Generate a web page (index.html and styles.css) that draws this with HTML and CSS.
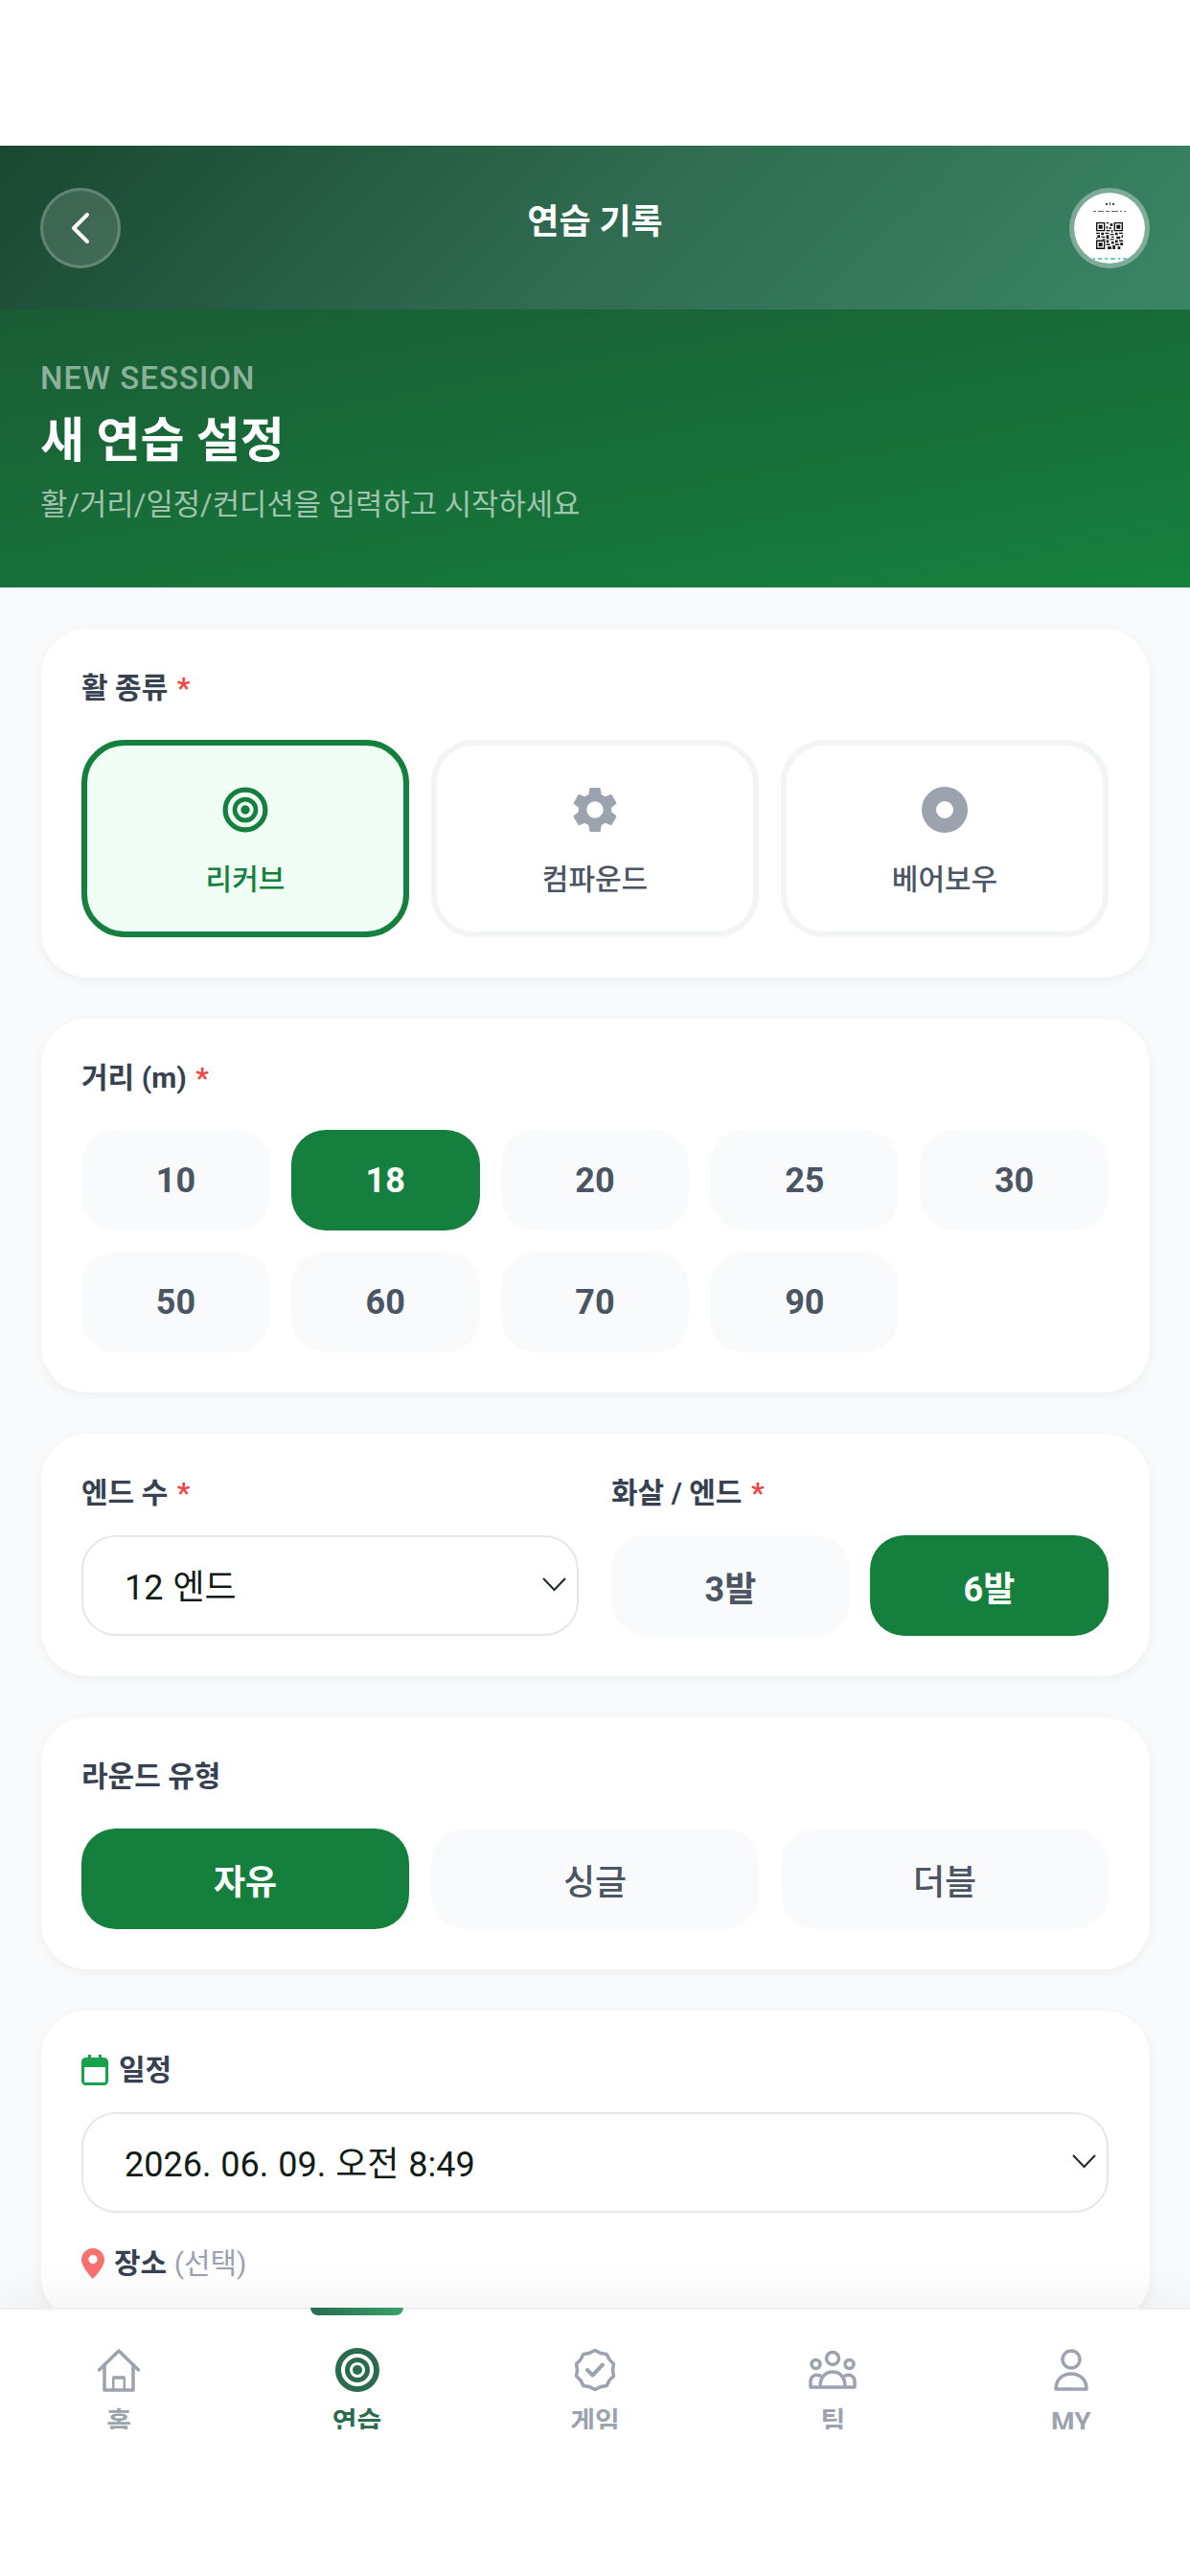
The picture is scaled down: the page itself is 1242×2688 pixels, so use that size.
FILE: index.html
```html
<!DOCTYPE html>
<html lang="ko">
<head>
<meta charset="UTF-8" />
<meta name="viewport" content="width=device-width, initial-scale=1" />
<title>연습 기록</title>
<link rel="stylesheet" href="styles.css">
</head>
<body>

<div class="app">
  <div class="status-space"></div>

  <header class="topbar">
    <button class="back-btn" aria-label="back">
      <svg width="22" height="34" viewBox="0 0 22 34"><path d="M18 3 L4 17 L18 31" fill="none" stroke="#fff" stroke-width="4" stroke-linecap="round" stroke-linejoin="round"/></svg>
    </button>
    <div class="topbar-title">연습 기록</div>
    <div class="avatar">
      <svg width="74" height="74" viewBox="0 0 74 74">
        <path d="M33 11h2v2h-2zM37 10h1v3h-1zM40 11h2v2h-2z" fill="#444"/>
        <path d="M20 19h3v1h-3zM25 19h6v1h-6zM33 19h4v1h-4zM39 19h7v1h-7zM48 19h2v1h-2zM52 19h2v1h-2z" fill="#666"/>
        <g transform="translate(23 31) scale(1.33)">
          <path fill="#111" fill-rule="evenodd" d="M0 0h7v7h-7zM1 1v5h5v-5zM14 0h7v7h-7zM15 1v5h5v-5zM0 14h7v7h-7zM1 15v5h5v-5z"/>
          <path fill="#111" d="M2 2h3v3h-3zM16 2h3v3h-3zM2 16h3v3h-3zM8 0h2v1h-2zM11 1h2v2h-2zM8 3h1v2h-1zM10 4h2v1h-2zM8 6h3v1h-3zM12 6h1v2h-1zM0 8h3v1h-3zM4 8h2v2h-2zM7 8h3v1h-3zM11 9h3v1h-3zM15 8h2v2h-2zM18 8h3v1h-3zM1 10h2v2h-2zM4 11h3v1h-3zM8 10h2v3h-2zM12 11h2v1h-2zM16 11h3v2h-3zM20 10h1v2h-1zM0 12h1v1h-1zM5 13h2v1h-2zM11 13h3v1h-3zM15 14h2v2h-2zM18 14h3v1h-3zM8 14h2v2h-2zM12 15h2v2h-2zM19 16h2v2h-2zM8 17h3v1h-3zM15 17h3v1h-3zM9 19h3v2h-3zM13 18h2v3h-2zM17 19h2v2h-2z"/>
        </g>
        <path d="M14 68h3v2h-3zM20 68h2v2h-2zM25 68h4v2h-4zM32 68h3v2h-3zM38 68h5v2h-5zM46 68h2v2h-2zM51 68h4v2h-4zM58 68h2v2h-2z" fill="#6cc"/>
      </svg>
    </div>
  </header>

  <section class="hero">
    <div class="hero-eyebrow">NEW SESSION</div>
    <h1 class="hero-title">새 연습 설정</h1>
    <p class="hero-sub">활/거리/일정/컨디션을 입력하고 시작하세요</p>
  </section>

  <main class="content">
    <section class="card">
      <div class="field-label">활 종류 <span class="req">*</span></div>
      <div class="bow-grid">
        <div class="bow-btn selected">
          <svg width="48" height="48" viewBox="0 0 46 46"><circle cx="23" cy="23" r="20" fill="none" stroke="#15803d" stroke-width="5"/><circle cx="23" cy="23" r="10.5" fill="none" stroke="#15803d" stroke-width="4.5"/><circle cx="23" cy="23" r="4.5" fill="#15803d"/></svg>
          <span>리커브</span>
        </div>
        <div class="bow-btn">
          <svg width="48" height="48" viewBox="2 2 20 20"><path fill="#9ca3af" d="M19.14 12.94c.04-.3.06-.61.06-.94 0-.32-.02-.64-.07-.94l2.03-1.58c.18-.14.23-.41.12-.61l-1.92-3.32c-.12-.22-.37-.29-.59-.22l-2.39.96c-.5-.38-1.03-.7-1.62-.94l-.36-2.54c-.04-.24-.24-.41-.48-.41h-3.84c-.24 0-.43.17-.47.41l-.36 2.54c-.59.24-1.13.57-1.62.94l-2.39-.96c-.22-.08-.47 0-.59.22L2.74 8.87c-.12.21-.08.47.12.61l2.03 1.58c-.05.3-.09.63-.09.94s.02.64.07.94l-2.03 1.58c-.18.14-.23.41-.12.61l1.92 3.32c.12.22.37.29.59.22l2.39-.96c.5.38 1.03.7 1.62.94l.36 2.54c.05.24.24.41.48.41h3.84c.24 0 .44-.17.47-.41l.36-2.54c.59-.24 1.13-.56 1.62-.94l2.39.96c.22.08.47 0 .59-.22l1.92-3.32c.12-.22.07-.47-.12-.61l-2.01-1.58zM12 15.6c-1.98 0-3.6-1.62-3.6-3.6s1.62-3.6 3.6-3.6 3.6 1.62 3.6 3.6-1.62 3.6-3.6 3.6z"/></svg>
          <span>컴파운드</span>
        </div>
        <div class="bow-btn">
          <svg width="48" height="48" viewBox="0 0 48 48"><circle cx="24" cy="24" r="16.5" fill="none" stroke="#9ca3af" stroke-width="15"/></svg>
          <span>베어보우</span>
        </div>
      </div>
    </section>

    <section class="card">
      <div class="field-label">거리 (m) <span class="req">*</span></div>
      <div class="dist-grid">
        <div class="chip">10</div>
        <div class="chip active">18</div>
        <div class="chip">20</div>
        <div class="chip">25</div>
        <div class="chip">30</div>
        <div class="chip">50</div>
        <div class="chip">60</div>
        <div class="chip">70</div>
        <div class="chip">90</div>
      </div>
    </section>

    <section class="card two-col">
      <div>
        <div class="field-label tight">엔드 수 <span class="req">*</span></div>
        <div class="select-box">
          <span>12 엔드</span>
          <svg width="27" height="16" viewBox="0 0 27 16"><path d="M2 2 L13.5 14 L25 2" fill="none" stroke="#1f2a24" stroke-width="2"/></svg>
        </div>
      </div>
      <div>
        <div class="field-label tight">화살 / 엔드 <span class="req">*</span></div>
        <div class="arrow-grid">
          <div class="chip">3발</div>
          <div class="chip active">6발</div>
        </div>
      </div>
    </section>

    <section class="card">
      <div class="field-label">라운드 유형</div>
      <div class="round-grid">
        <div class="chip active">자유</div>
        <div class="chip light">싱글</div>
        <div class="chip light">더블</div>
      </div>
    </section>

    <section class="card">
      <div class="field-label icon-label tight">
        <svg width="28" height="32" viewBox="0 0 28 32"><path d="M7 0h3v6h-3zM18 0h3v6h-3z" fill="#16a34a"/><rect x="1.5" y="4.5" width="25" height="26" rx="3" fill="none" stroke="#16a34a" stroke-width="3"/><path d="M2 5h24v8h-24z" fill="#16a34a"/></svg>
        일정
      </div>
      <div class="select-box">
        <span>2026. 06. 09. 오전 8:49</span>
        <svg width="27" height="16" viewBox="0 0 27 16"><path d="M2 2 L13.5 14 L25 2" fill="none" stroke="#1f2a24" stroke-width="2"/></svg>
      </div>
      <div class="field-label icon-label place-label">
        <svg width="24" height="32" viewBox="0 0 24 32"><path fill-rule="evenodd" fill="#f87171" d="M12 0C5.4 0 0 5.4 0 12c0 8 12 20 12 20s12-12 12-20C24 5.4 18.6 0 12 0zM12 7a4.6 4.6 0 1 1 0 9.2A4.6 4.6 0 0 1 12 7z"/></svg>
        <span>장소 <span class="optional">(선택)</span></span>
      </div>
    </section>
  </main>

  <nav class="bottom-nav">
    <div class="nav-item">
      <div class="nav-mark"></div>
      <div class="nav-icon">
        <svg width="46" height="46" viewBox="0 0 46 46" fill="none" stroke="#9ca3af" stroke-width="3.5" stroke-linejoin="round" stroke-linecap="round"><path d="M2.500 23 L23 3 L43.500 23"/><path d="M8 18 V44 H38 V18"/><path d="M15 44 V31 H31 V44" transform="translate(23 0) scale(.72 1) translate(-23 0)"/></svg>
      </div>
      <div class="nav-label">홈</div>
    </div>
    <div class="nav-item active">
      <div class="nav-mark"></div>
      <div class="nav-icon">
        <svg width="46" height="46" viewBox="0 0 46 46"><circle cx="23" cy="23" r="20" fill="none" stroke="#2a6b4f" stroke-width="6"/><circle cx="23" cy="23" r="10.500" fill="none" stroke="#2a6b4f" stroke-width="5"/><circle cx="23" cy="23" r="5" fill="#2a6b4f"/></svg>
      </div>
      <div class="nav-label">연습</div>
    </div>
    <div class="nav-item">
      <div class="nav-mark"></div>
      <div class="nav-icon">
        <svg width="44" height="44" viewBox="0 0 44 44" fill="none" stroke="#9ca3af" stroke-width="3.500" stroke-linejoin="round" stroke-linecap="round"><polygon points="22,1.500 27.720,4.410 34.050,5.420 36.970,11.130 41.500,15.670 40.500,22 41.500,28.330 36.970,32.870 34.050,38.580 27.720,39.590 22,42.500 16.280,39.590 9.950,38.580 7.030,32.870 2.500,28.330 3.500,22 2.500,15.670 7.030,11.130 9.950,5.420 16.280,4.410"/><path d="M14 22 L19.500 27.500 L30 16.500" stroke-width="4"/></svg>
      </div>
      <div class="nav-label">게임</div>
    </div>
    <div class="nav-item">
      <div class="nav-mark"></div>
      <div class="nav-icon">
        <svg width="50" height="42" viewBox="0 0 50 42" fill="none" stroke="#9ca3af" stroke-width="3.500" stroke-linejoin="round" stroke-linecap="round"><circle cx="25" cy="9" r="6.500"/><circle cx="7.500" cy="15" r="4.500"/><circle cx="42.500" cy="15" r="4.500"/><path d="M12 38 C12 28 18 23 25 23 C32 23 38 28 38 38"/><path d="M2 39 V33 C2 28 6 25 12 27 M48 39 V33 C48 28 44 25 38 27 M2 39 H48"/></svg>
      </div>
      <div class="nav-label">팀</div>
    </div>
    <div class="nav-item">
      <div class="nav-mark"></div>
      <div class="nav-icon">
        <svg width="36" height="46" viewBox="0 0 36 46" fill="none" stroke="#9ca3af" stroke-width="3.500" stroke-linejoin="round"><circle cx="18" cy="12" r="9"/><path d="M2 43 C2 33 9 27 18 27 C27 27 34 33 34 43 Z"/></svg>
      </div>
      <div class="nav-label">MY</div>
    </div>
  </nav>
</div>

</body>
</html>
```

FILE: styles.css
```css
* {
  box-sizing: border-box;
}
html, body {
  margin: 0;
  height: 100%;
  overflow: hidden;
}
body {
  background: #fff;
  font-family: Roboto, 'Noto Sans CJK KR', sans-serif;
  color: #374151;
}
.app {
  display: flex;
  flex-direction: column;
  height: 2688px;
}
.status-space {
  height: 152px;
  flex-shrink: 0;
}

/* header */
.topbar {
  height: 171px;
  flex-shrink: 0;
  padding: 0 42px;
  display: flex;
  align-items: center;
  justify-content: space-between;
  background: linear-gradient(135deg, #1a4731 0%, #2f6b50 50%, #3a8566 100%);
}
.back-btn {
  width: 84px;
  height: 84px;
  padding: 0;
  border-radius: 50%;
  border: 3px solid rgba(255, 255, 255, 0.2);
  background: rgba(255, 255, 255, 0.14);
  display: flex;
  align-items: center;
  justify-content: center;
}
.topbar-title {
  color: #fff;
  font-size: 36px;
  font-weight: 700;
  padding-bottom: 19px;
}
.avatar {
  width: 84px;
  height: 84px;
  border-radius: 50%;
  border: 5px solid rgba(255, 255, 255, 0.35);
  background: #fff;
  background-clip: padding-box;
  overflow: hidden;
}
.avatar svg {
  display: block;
}

/* hero */
.hero {
  height: 290px;
  flex-shrink: 0;
  padding: 52px 42px 0;
  background: linear-gradient(170deg, #1a5c35 0%, #15803d 100%);
}
.hero-eyebrow {
  font-size: 33px;
  line-height: 40px;
  font-weight: 500;
  letter-spacing: 1px;
  color: rgba(255, 255, 255, 0.5);
}
.hero-title {
  margin: 13px 0 0;
  font-size: 50px;
  line-height: 64px;
  font-weight: 700;
  color: #fff;
}
.hero-sub {
  margin: 13px 0 0;
  font-size: 30.8px;
  line-height: 44px;
  color: rgba(255, 255, 255, 0.6);
}

/* cards */
.content {
  flex: 1;
  min-height: 0;
  overflow: hidden;
  background: #f9fafb;
  padding: 43px 42px 43px 43px;
  display: flex;
  flex-direction: column;
  gap: 43px;
}
.card {
  flex-shrink: 0;
  background: #fff;
  border-radius: 48px;
  padding: 42px 43px 42px 42px;
  box-shadow: 0 3px 12px rgba(0, 0, 0, 0.05);
}
.field-label {
  font-size: 30px;
  line-height: 40px;
  font-weight: 700;
  color: #374151;
  margin-bottom: 34px;
}
.field-label.tight {
  margin-bottom: 24px;
}
.req {
  color: #ef4444;
  margin-left: 2px;
}
.icon-label {
  display: flex;
  align-items: center;
  gap: 11px;
}
.place-label {
  margin: 33px 0 0;
  gap: 10px;
}
.optional {
  color: #9ca3af;
  font-weight: 400;
}

.bow-grid, .round-grid {
  display: grid;
  grid-template-columns: repeat(3, 1fr);
  gap: 23px;
}
.bow-btn {
  height: 206px;
  border: 6px solid #f3f4f6;
  border-radius: 45px;
  display: flex;
  flex-direction: column;
  align-items: center;
  padding-top: 43px;
  background: #fff;
  font-size: 30px;
  font-weight: 500;
  color: #4b5563;
}
.bow-btn svg {
  margin-bottom: 24px;
}
.bow-btn.selected {
  border-color: #15803d;
  background: #f0fdf4;
  color: #15803d;
}

.dist-grid {
  display: grid;
  grid-template-columns: repeat(5, 1fr);
  gap: 22px;
}
.chip {
  height: 105px;
  border-radius: 36px;
  background: #f9fafb;
  color: #4b5563;
  font-size: 36px;
  font-weight: 700;
  display: flex;
  align-items: center;
  justify-content: center;
}
.chip.light {
  font-weight: 500;
}
.chip.active {
  background: #15803d;
  color: #fff;
}

.two-col {
  display: grid;
  grid-template-columns: 1fr 1fr;
  gap: 34px;
}
.arrow-grid {
  display: grid;
  grid-template-columns: 1fr 1fr;
  gap: 21px;
}
.select-box {
  height: 105px;
  border: 2.5px solid #e5e7eb;
  border-radius: 36px;
  background: #fff;
  padding: 0 10px 3px 43px;
  display: flex;
  align-items: center;
  justify-content: space-between;
  font-size: 36px;
  word-spacing: 1px;
  color: #111c16;
}

/* bottom nav */
.bottom-nav {
  position: relative;
  height: 280px;
  flex-shrink: 0;
  background: #fff;
  border-top: 2px solid #eeeff1;
  box-shadow: 0 -10px 50px rgba(0, 0, 0, 0.05);
  display: grid;
  grid-template-columns: repeat(5, 1fr);
  align-items: start;
}
.nav-item {
  display: flex;
  flex-direction: column;
  align-items: center;
  color: #9ca3af;
}
.nav-mark {
  width: 97px;
  height: 8px;
  margin-top: -2px;
  border-radius: 0 0 8px 8px;
}
.nav-item.active .nav-mark {
  background: linear-gradient(90deg, #2a6b4f, #38a169);
}
.nav-icon {
  height: 46px;
  margin-top: 34px;
  display: flex;
  align-items: center;
}
.nav-icon svg {
  display: block;
}
.nav-label {
  margin-top: 16px;
  height: 23px;
  overflow: hidden;
  font-size: 28px;
  line-height: 32px;
  font-weight: 700;
}
.nav-item.active .nav-label {
  color: #2a6b4f;
}
```
